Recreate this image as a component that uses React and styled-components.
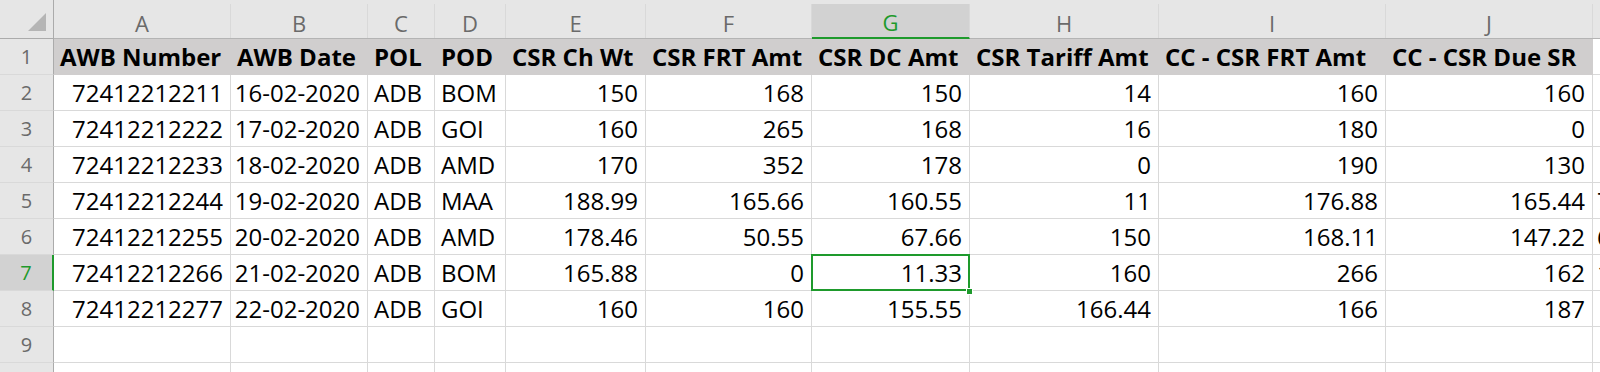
import React from "react";
import styled, { createGlobalStyle, css } from "styled-components";

const GREEN = "#1e9a2c";
const GRID = "#d9d9d9";
const HEAD_BG = "#e6e6e6";
const HEAD_SEL = "#d2d2d2";
const FILL = "#d0cece";

const Global = createGlobalStyle`
  html, body { margin: 0; padding: 0; background: #fff; overflow: hidden; }
  body { font-family: "Open Sans", "Liberation Sans", sans-serif; }
`;

const Sheet = styled.div`
  display: grid;
  grid-template-columns: 54px 177px 137px 67px 71px 140px 166px 158px 189px 227px 207px 120px;
  grid-template-rows: 39px repeat(10, 36px);
  width: 1600px;
  height: 372px;
  overflow: hidden;
`;

const Corner = styled.div`
  background: ${HEAD_BG};
  border-right: 1px solid #ababab;
  border-bottom: 1px solid #ababab;
  box-sizing: border-box;
  display: flex;
  justify-content: flex-end;
  align-items: flex-end;
  padding: 0 7px 7px 0;
`;

const ColHead = styled.div`
  box-sizing: border-box;
  background: ${HEAD_BG};
  border-bottom: 1px solid #b4b4b4;
  display: flex;
  align-items: stretch;
  padding-top: 4px;
`;

const ColHeadInner = styled.div`
  flex: 1;
  box-sizing: border-box;
  border-right: 1px solid ${GRID};
  display: flex;
  align-items: center;
  justify-content: center;
  padding-top: 3px;
  font-size: 22px;
  line-height: 1;
  color: #6a6a6a;
  ${(p) =>
    p.$selected &&
    css`
      background: ${HEAD_SEL};
      color: ${GREEN};
      border-bottom: 2px solid ${GREEN};
      margin-bottom: -1px;
    `}
`;

const RowHead = styled.div`
  box-sizing: border-box;
  background: ${HEAD_BG};
  border-right: 1px solid #ababab;
  border-bottom: 1px solid ${GRID};
  display: flex;
  align-items: center;
  justify-content: center;
  font-size: 20px;
  line-height: 1;
  color: #6a6a6a;
  ${(p) =>
    p.$selected &&
    css`
      background: ${HEAD_SEL};
      color: ${GREEN};
      border-right: 2px solid ${GREEN};
    `}
`;

const Cell = styled.div`
  position: relative;
  box-sizing: border-box;
  border-right: 1px solid ${(p) => (p.$fill ? FILL : GRID)};
  border-bottom: 1px solid ${(p) => (p.$fill ? FILL : GRID)};
  background: ${(p) => (p.$fill ? FILL : "#fff")};
  display: flex;
  align-items: center;
  justify-content: ${(p) => (p.$align === "right" ? "flex-end" : "flex-start")};
  padding: ${(p) => (p.$align === "right" ? "0 7px 0 0" : "0 0 0 6px")};
  font-size: 24px;
  line-height: 1;
  color: #000;
  font-weight: ${(p) => (p.$bold ? 700 : 400)};
  white-space: nowrap;
  ${(p) =>
    p.$selected &&
    css`
      &::after {
        content: "";
        position: absolute;
        top: -1px;
        left: -1px;
        right: -1px;
        bottom: -1px;
        border: 2px solid ${GREEN};
        pointer-events: none;
      }
      &::before {
        content: "";
        position: absolute;
        right: -4px;
        bottom: -5px;
        width: 5px;
        height: 5px;
        background: ${GREEN};
        border: 1px solid #fff;
        z-index: 2;
      }
    `}
`;

const OverflowCell = styled(Cell)`
  border-right: none;
  padding-left: 4px;
  overflow: visible;
`;

const cols = ["A", "B", "C", "D", "E", "F", "G", "H", "I", "J", ""];
const headers = [
  "AWB Number",
  "AWB Date",
  "POL",
  "POD",
  "CSR Ch Wt",
  "CSR FRT Amt",
  "CSR DC Amt",
  "CSR Tariff Amt",
  "CC - CSR FRT Amt",
  "CC - CSR Due SR",
];
const align = ["right", "right", "left", "left", "right", "right", "right", "right", "right", "right"];
const rows = [
  ["72412212211", "16-02-2020", "ADB", "BOM", "150", "168", "150", "14", "160", "160"],
  ["72412212222", "17-02-2020", "ADB", "GOI", "160", "265", "168", "16", "180", "0"],
  ["72412212233", "18-02-2020", "ADB", "AMD", "170", "352", "178", "0", "190", "130"],
  ["72412212244", "19-02-2020", "ADB", "MAA", "188.99", "165.66", "160.55", "11", "176.88", "165.44"],
  ["72412212255", "20-02-2020", "ADB", "AMD", "178.46", "50.55", "67.66", "150", "168.11", "147.22"],
  ["72412212266", "21-02-2020", "ADB", "BOM", "165.88", "0", "11.33", "160", "266", "162"],
  ["72412212277", "22-02-2020", "ADB", "GOI", "160", "160", "155.55", "166.44", "166", "187"],
];
const kCol = ["", "", "", "7", "6", "1", ""];

export default function App() {
  const selRow = 7;
  const selCol = 6;
  return (
    <>
      <Global />
      <Sheet>
        <Corner>
          <svg width="18" height="18" viewBox="0 0 18 18">
            <polygon points="18,0 18,18 0,18" fill="#b5b5b5" />
          </svg>
        </Corner>
        {cols.map((c, i) => (
          <ColHead key={"h" + i}>
            <ColHeadInner $selected={i === selCol}>{c}</ColHeadInner>
          </ColHead>
        ))}

        <RowHead>1</RowHead>
        {headers.map((h, i) => (
          <Cell key={"t" + i} $fill $bold $align="left">
            {h}
          </Cell>
        ))}
        <OverflowCell />

        {rows.map((r, ri) => {
          const n = ri + 2;
          return (
            <React.Fragment key={"r" + n}>
              <RowHead $selected={n === selRow}>{n}</RowHead>
              {r.map((v, ci) => (
                <Cell key={ci} $align={align[ci]} $selected={n === selRow && ci === selCol}>
                  {v}
                </Cell>
              ))}
              <OverflowCell>{kCol[ri]}</OverflowCell>
            </React.Fragment>
          );
        })}

        {[9, 10].map((n) => (
          <React.Fragment key={"e" + n}>
            <RowHead>{n}</RowHead>
            {headers.map((_, ci) => (
              <Cell key={ci} />
            ))}
            <OverflowCell />
          </React.Fragment>
        ))}
      </Sheet>
    </>
  );
}
